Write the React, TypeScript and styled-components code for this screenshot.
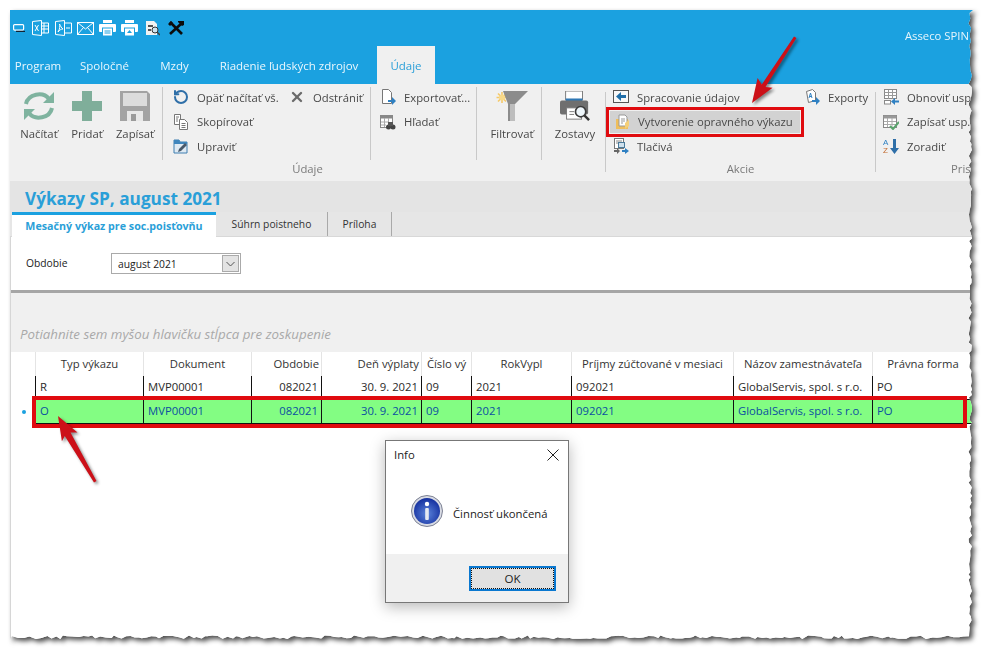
import React from "react";
import styled, { createGlobalStyle } from "styled-components";
import { RotateCcw, X } from "lucide-react";

const BLUE = "#1ba1e0";
const RED = "#e00b0f";
const FONT = `"Open Sans", "Noto Sans", sans-serif`;
const WIN_W = 963;
const WIN_H = 630;
const COLUMNS = "24px 108px 108px 70px 100px 50px 100px 162px 139px 1fr";

// jagged right and bottom edge of the pasted screenshot
function tornEdge(w: number, h: number) {
  let seed = 17;
  const rnd = () => {
    seed = (seed * 16807) % 2147483647;
    return (seed % 1000) / 1000;
  };
  const pts = ["0px 0px", `${w}px 0px`];
  for (let y = 3; y < h - 4; y += 2 + rnd() * 4) {
    pts.push(`${(w - 1 - rnd() * 3.5).toFixed(1)}px ${y.toFixed(1)}px`);
  }
  for (let x = w - 4; x > 0; x -= 2 + rnd() * 5) {
    pts.push(`${x.toFixed(1)}px ${(h - 1 - rnd() * 3.5).toFixed(1)}px`);
  }
  pts.push(`0px ${h}px`);
  return `polygon(${pts.join(",")})`;
}

const Refresh = () => (
  <svg width="32" height="30" viewBox="0 0 32 30" fill="none" stroke="#7fb39f" strokeWidth="4">
    <path d="M3 13C5 3 20 0 26 8" />
    <path d="M29 17C27 27 12 30 6 22" />
    <path d="M31 1v11H20z" fill="#7fb39f" stroke="none" />
    <path d="M1 29V18h11z" fill="#7fb39f" stroke="none" />
  </svg>
);
const Plus = () => (
  <svg width="30" height="30" viewBox="0 0 30 30" fill="#7fae9a">
    <rect x="10" width="10" height="30" />
    <rect y="10" width="30" height="10" />
  </svg>
);
const Floppy = () => (
  <svg width="30" height="30" viewBox="0 0 30 30">
    <path d="M0 0h27l3 3v27H0z" fill="#a3a3a3" />
    <rect x="3" y="2" width="24" height="13" fill="#dcdcdc" />
    <rect x="7" y="20" width="16" height="10" fill="#e8e8e8" />
    <rect x="11" y="23" width="5" height="7" fill="#9a9a9a" />
  </svg>
);
const Funnel = () => (
  <svg width="32" height="30" viewBox="0 0 32 30">
    <g stroke="#f5c96a" strokeWidth="1.6">
      <path d="M6 1v11M0.500 6.500h11M2 2.500l8 8M10 2.500l-8 8" />
    </g>
    <circle cx="6" cy="6.500" r="3" fill="#f8d98a" />
    <path d="M7 0h25L19 13v17h-7V13z" fill="#8c8c8c" />
    <path d="M14 13h5v17h-5z" fill="#bdbdbd" />
  </svg>
);
const ReportPrinter = () => (
  <svg width="32" height="32" viewBox="0 0 32 32">
    <rect x="6" y="0" width="18" height="9" fill="#fff" stroke="#777" />
    <rect x="6" y="8" width="18" height="3" fill="#2f78b5" />
    <rect x="0" y="10" width="30" height="15" rx="2" fill="#6f6f6f" />
    <rect x="7" y="18" width="16" height="12" fill="#fff" stroke="#777" />
    <path d="M10 22h5M10 25h5" stroke="#777" />
    <circle cx="22" cy="22" r="5.5" fill="#eef6fb" stroke="#3a3a3a" strokeWidth="1.8" />
    <path d="M26 26l5 5" stroke="#333" strokeWidth="2.6" />
  </svg>
);

const CopyDocs = () => (
  <svg width="16" height="16" viewBox="0 0 16 16" fill="#fff" stroke="#777">
    <path d="M1.5.5h6v10h-6z" />
    <path d="M6.5 5.5h5l3 3v7h-8z" />
    <path d="M8.5 9.5h4M8.5 11.5h4M8.5 13.5h4M3 3h3M3 5h2M3 7h2" />
  </svg>
);
const FolderPen = () => (
  <svg width="16" height="16" viewBox="0 0 16 16">
    <path d="M1 2h5l1 2h7v11H1z" fill="#dfeaf3" stroke="#3f7fb0" />
    <path d="M1 2h5l1 2h7v2H1z" fill="#3f86bd" />
    <path d="M5 14l1-3 6-6 2 2-6 6z" fill="#47586a" />
  </svg>
);
const DocArrow = () => (
  <svg width="16" height="16" viewBox="0 0 16 16">
    <path d="M2.5.5h6l3 3v11h-9z" fill="#fff" stroke="#777" />
    <path d="M8 11h4V8l4 4-4 4v-3H8z" fill="#2f80c2" />
  </svg>
);
const TableFind = () => (
  <svg width="16" height="16" viewBox="0 0 16 16">
    <rect x=".5" y="1.5" width="12" height="12" fill="#fff" stroke="#888" />
    <rect x=".5" y="1.5" width="12" height="3" fill="#888" />
    <path d="M4.5 4v9M8.5 4v5M1 8h8M1 11h5" stroke="#aaa" />
    <circle cx="8.5" cy="13" r="2.5" fill="#444" />
    <circle cx="13" cy="13" r="2.5" fill="#444" />
    <rect x="8" y="8" width="5" height="4" fill="#555" />
  </svg>
);
const BackBox = () => (
  <svg width="16" height="16" viewBox="0 0 16 16">
    <rect x=".5" y="1.5" width="15" height="12" fill="#f8f8f8" stroke="#555" />
    <path d="M8 3v3h5v3H8v3L3 7.500z" fill="#1f6ea8" />
  </svg>
);
const YellowDoc = () => (
  <svg width="16" height="16" viewBox="0 0 16 16">
    <path d="M2 5h12v10H2z" fill="#efbe5c" />
    <path d="M5 1h6l2 2v9H5z" fill="#fff" stroke="#999" />
    <path d="M7 5h4M7 7h4M7 9h2" stroke="#999" />
    <path d="M11 9l4-3v6l-4 3z" fill="#f5cf78" />
  </svg>
);
const Forms = () => (
  <svg width="16" height="16" viewBox="0 0 16 16">
    <rect x="1.5" y=".5" width="9" height="10" fill="#fff" stroke="#777" />
    <path d="M3 3h6M3 5h3" stroke="#888" />
    <rect x="5.5" y="4.5" width="6" height="5" fill="#cfe0ec" stroke="#4a7a9a" />
    <path d="M1 12h3v-2l3 3-3 3v-2H1z" fill="#666" />
    <path d="M9 12h3v-2l4 3-4 3v-2H9z" fill="#2f80c2" />
  </svg>
);
const ExportDoc = () => (
  <svg width="16" height="16" viewBox="0 0 16 16">
    <path d="M2.5 2.5l6-2 3 3v8l-7 2z" fill="#fff" stroke="#777" />
    <path d="M5 9l1.5-5 1.5 5M5.6 7.5h2" stroke="#2f80c2" fill="none" />
    <path d="M8 11h4V8l4 4-4 4v-3H8z" fill="#2f80c2" />
  </svg>
);
const TableBack = () => (
  <svg width="16" height="16" viewBox="0 0 16 16">
    <rect x="1.5" y=".5" width="12" height="9" fill="#fff" stroke="#888" />
    <path d="M1.5 3.5h12M1.5 6.5h12M5.5 1v9M9.5 1v9" stroke="#999" />
    <rect x="1.5" y="11.5" width="6" height="3.5" fill="#fff" stroke="#888" />
    <path d="M16 11.500h-4V9l-4 3.500 4 3.500v-2.500h4z" fill="#2f80c2" />
  </svg>
);
const TableCheck = () => (
  <svg width="16" height="16" viewBox="0 0 16 16">
    <rect x=".5" y="1.5" width="13" height="12" fill="#fff" stroke="#888" />
    <rect x=".5" y="1.5" width="13" height="3" fill="#999" />
    <path d="M4.5 4v9M9 4v9M1 7.500h12M1 10.500h12" stroke="#aaa" />
    <path d="M7 12l3 3 6-7" fill="none" stroke="#5aa46d" strokeWidth="2" />
  </svg>
);
const SortAz = () => (
  <svg width="16" height="16" viewBox="0 0 16 16">
    <text x="0" y="7" fontSize="8" fontFamily="Liberation Sans" fill="#2f80c2">A</text>
    <text x="0" y="15" fontSize="8" fontFamily="Liberation Sans" fill="#c26a2f">Z</text>
    <path d="M10 1h3v9h3l-4.500 6L7 10h3z" fill="#2f6fa8" />
  </svg>
);

const WinIcon = () => (
  <svg width="12" height="8" viewBox="0 0 12 8" fill="none" stroke="#fff" strokeWidth="1.2">
    <rect x=".6" y=".6" width="10" height="5.500" rx="1" />
    <path d="M3 7.400h9" stroke="#123" />
  </svg>
);
const XlsIcon = () => (
  <svg width="17" height="16" viewBox="0 0 17 16" fill="none" stroke="#fff">
    <path d="M.5 1.500l9-1v15l-9-1z" />
    <path d="M9.500 3h7v10h-7M12 3v10M9.500 6h7M9.500 9h7" />
    <path d="M3 5l3.500 6M6.500 5L3 11" />
  </svg>
);
const PdfIcon = () => (
  <svg width="17" height="16" viewBox="0 0 17 16" fill="none" stroke="#fff">
    <path d="M.5 1.500l9-1v15l-9-1z" />
    <path d="M9.500 3h7v10h-7M11 8h4" />
    <path d="M3 12c2-3 2-6 1.500-8 1 2 2 4 3.500 5-2 0-3.500 1-5 3z" />
  </svg>
);
const MailIcon = () => (
  <svg width="17" height="15" viewBox="0 0 17 15" fill="none" stroke="#fff">
    <rect x=".5" y="1.500" width="16" height="12" />
    <path d="M.5 1.500l8 6.500 8-6.500M.5 13.500l6-7M16.500 13.500l-6-7" />
  </svg>
);
const PrintIcon = ({ up }: { up?: boolean }) => (
  <svg width="17" height="16" viewBox="0 0 17 16" fill="#fff">
    <rect x="4" y="0" width="9" height="3" />
    <rect x="0" y="4" width="17" height="8" rx="1" />
    <rect x="3.500" y="8" width="10" height="8" fill="#fff" stroke={BLUE} />
    {up ? <path d="M8.500 10l2.500 3H6z" fill={BLUE} /> : <path d="M5.500 11h6M5.500 13h6" stroke={BLUE} />}
  </svg>
);
const PreviewIcon = () => (
  <svg width="14" height="16" viewBox="0 0 14 16">
    <path d="M0 1h8l3 3v11H0z" fill="#f2f2f2" />
    <path d="M2 5h5v2H2zM2 9h3v2H2z" fill="#555" />
    <circle cx="9" cy="10" r="3" fill="#cfe5f2" stroke="#333" />
    <path d="M11 12l3 3" stroke="#444" strokeWidth="1.500" />
  </svg>
);
const ToolsIcon = () => (
  <svg width="16" height="15" viewBox="0 0 16 15" fill="none" stroke="#0c0c0c">
    <path d="M2 1l12 12" strokeWidth="2.600" />
    <path d="M14 2L2 13" strokeWidth="2.600" />
    <path d="M10 0h6v4l-2 1-4-4zM0 3l3-3 2 2-3 3z" fill="#0c0c0c" stroke="none" />
  </svg>
);
const InfoIcon = () => (
  <svg width="32" height="32" viewBox="0 0 32 32">
    <defs>
      <radialGradient id="infoFill" cx="50%" cy="60%" r="60%">
        <stop offset="0" stopColor="#5b83db" />
        <stop offset="1" stopColor="#142f9e" />
      </radialGradient>
    </defs>
    <circle cx="16" cy="16" r="15.500" fill="#d8dbe4" stroke="#7d8294" />
    <circle cx="16" cy="16" r="13" fill="url(#infoFill)" />
    <circle cx="16" cy="9" r="2.200" fill="#fff" />
    <rect x="14.200" y="13" width="3.600" height="12" rx="1" fill="#e7eaf2" />
  </svg>
);

const Global = createGlobalStyle`
  html, body {
    margin: 0;
    background: #fff;
  }
  body {
    width: 991px;
    height: 658px;
    overflow: hidden;
    font-family: ${FONT};
    font-size: 11.3px;
    color: #333;
  }
`;

const Page = styled.div`
  padding: 10px;
`;

const Shadow = styled.div`
  width: ${WIN_W}px;
  height: ${WIN_H}px;
  filter: drop-shadow(3px 3px 2.5px rgba(0, 0, 0, 0.7));
`;

const Window = styled.div`
  position: relative;
  width: 100%;
  height: 100%;
  background: #fff;
  display: flex;
  flex-direction: column;
  overflow: hidden;
`;

const TopBar = styled.header`
  background: ${BLUE};
  height: 74px;
  flex: none;
  display: flex;
  flex-direction: column;
`;

const QuickBar = styled.div`
  height: 36px;
  display: flex;
  align-items: center;
  padding: 0 4px 0 3px;
  gap: 5px;
`;

const QuickSpace = styled.span<{ $w: number }>`
  display: inline-flex;
  justify-content: center;
  width: ${(p) => p.$w}px;
`;

const Brand = styled.span`
  margin-left: auto;
  color: #e6f5fc;
  transform: translateY(7px);
  white-space: nowrap;
`;

const MenuRow = styled.nav`
  height: 38px;
  display: flex;
`;

const MenuTab = styled.div<{ $w: number; $active?: boolean }>`
  width: ${(p) => p.$w}px;
  margin-left: ${(p) => (p.$active ? 5 : 0)}px;
  display: flex;
  align-items: center;
  justify-content: center;
  font-size: 11.5px;
  white-space: nowrap;
  color: ${(p) => (p.$active ? "#2a9fd8" : "#eaf7fd")};
  background: ${(p) => (p.$active ? "#f0f0f0" : "transparent")};
`;

const Ribbon = styled.section`
  height: 97px;
  flex: none;
  background: #f0f0f0;
  display: flex;
  overflow: hidden;
  color: #484848;
`;

const Group = styled.div<{ $w: number }>`
  width: ${(p) => p.$w}px;
  height: 80px;
  margin-top: 8px;
  flex: none;
  box-sizing: border-box;
  border-right: 1px solid #c9c9c9;
  display: flex;
  flex-direction: column;

  &:last-child {
    border-right: 0;
  }
`;

const GroupBody = styled.div`
  display: flex;
  height: 73px;
  margin-top: -5px;
  flex: none;
`;

const GroupLabel = styled.div<{ $left?: boolean }>`
  line-height: 18px;
  color: #7a7a7a;
  text-align: ${(p) => (p.$left ? "left" : "center")};
  padding-left: ${(p) => (p.$left ? 75 : 0)}px;
  white-space: nowrap;
`;

const Section = styled.div<{ $w: number; $pad?: number; $end?: boolean }>`
  width: ${(p) => p.$w}px;
  flex: none;
  box-sizing: border-box;
  padding-left: ${(p) => p.$pad ?? 0}px;
  border-right: ${(p) => (p.$end ? "0" : "1px solid #c9c9c9")};
`;

const LargeRow = styled.div`
  display: flex;
`;

const LargeButton = styled.div<{ $w?: number }>`
  width: ${(p) => p.$w ?? 48}px;
  padding-top: 4px;
  display: flex;
  flex-direction: column;
  align-items: center;

  svg {
    height: 30px;
  }

  span {
    margin-top: 5px;
    line-height: 16px;
    white-space: nowrap;
  }
`;

const SmallGrid = styled.div<{ $cols?: string }>`
  display: grid;
  grid-template-columns: ${(p) => p.$cols ?? "auto"};
  grid-auto-rows: 24.500px;
  margin-top: -2px;
  justify-content: start;
`;

const SmallButton = styled.div<{ $hot?: boolean; $col?: number }>`
  position: relative;
  display: flex;
  align-items: center;
  gap: 8px;
  white-space: nowrap;
  grid-column: ${(p) => p.$col ?? 1};

  ${(p) =>
    p.$hot &&
    `
    background: #d2d2d2;
    margin: 1px 4px 1px -3px;
    padding-left: 4px;

    &::after {
      content: "";
      position: absolute;
      inset: -4px;
      border: 3px solid ${RED};
    }
  `}
`;

const PanelHead = styled.div`
  height: 31px;
  flex: none;
  box-sizing: border-box;
  padding: 5px 0 0 15px;
  background: #e4e4e4;
  color: #2a9fd8;
  font-size: 17.2px;
  font-weight: 700;
  line-height: 26px;
`;

const TabStrip = styled.div`
  height: 25px;
  flex: none;
  display: flex;
  background: #e6e6e6;
  border-bottom: 1px solid #d8d8d8;
  box-sizing: border-box;
`;

const PanelTab = styled.div<{ $w: number; $active?: boolean }>`
  width: ${(p) => p.$w}px;
  height: ${(p) => (p.$active ? 25 : 24)}px;
  flex: none;
  box-sizing: border-box;
  margin-left: ${(p) => (p.$active ? 2 : 0)}px;
  display: flex;
  align-items: center;
  justify-content: center;
  white-space: nowrap;
  font-size: ${(p) => (p.$active ? 10.7 : 10.3)}px;
  color: ${(p) => (p.$active ? "#2a9fd8" : "#333")};
  font-weight: ${(p) => (p.$active ? 700 : 400)};
  background: ${(p) => (p.$active ? "#fff" : "transparent")};
  border-top: ${(p) => (p.$active ? `3px solid ${BLUE}` : "0")};
  border-right: ${(p) => (p.$active ? "0" : "1px solid #a9a9a9")};
`;

const Body = styled.main`
  flex: 1;
  display: flex;
  flex-direction: column;
  border-left: 1px solid #d6d6d6;
  background: #fff;
`;

const FilterForm = styled.div`
  height: 53px;
  flex: none;
  display: flex;
  align-items: center;
  padding-left: 15px;
  font-size: 10.3px;
  color: #222;
`;

const FilterLabel = styled.label`
  width: 85px;
  padding-bottom: 1px;
`;

const Select = styled.div`
  width: 130px;
  height: 21px;
  box-sizing: border-box;
  border: 1px solid #aaa;
  padding: 0 1px 0 6px;
  display: flex;
  align-items: center;
  justify-content: space-between;
`;

const SelectArrow = styled.span`
  width: 17px;
  height: 17px;
  box-sizing: border-box;
  background: #e3e3e3;
  border: 1px solid #aaa;
  display: flex;
  align-items: center;
  justify-content: center;
`;

const Splitter = styled.div`
  height: 3px;
  flex: none;
  background: #a6a6a6;
`;

const GroupPanel = styled.div`
  height: 59px;
  flex: none;
  box-sizing: border-box;
  background: #f0f0f0;
  padding: 32px 0 0 9px;
  color: #a9a9a9;
  font-size: 13.3px;
  font-style: italic;
  line-height: 18px;
`;

const GridHead = styled.div`
  display: grid;
  grid-template-columns: ${COLUMNS};
  height: 24px;
`;

const HeadCell = styled.div<{ $right?: boolean }>`
  display: flex;
  align-items: center;
  justify-content: ${(p) => (p.$right ? "flex-end" : "center")};
  padding: 0 ${(p) => (p.$right ? 2 : 0)}px 2px 0;
  box-sizing: border-box;
  border-left: 1px solid #e4e4e4;
  color: #333;
  white-space: nowrap;

  &:first-child {
    border-left: 0;
  }
`;

const GridRow = styled.div<{ $current?: boolean }>`
  display: grid;
  grid-template-columns: ${COLUMNS};
  height: 24px;
  color: ${(p) => (p.$current ? "#0b4fa0" : "#2a2a2a")};
`;

const RowMark = styled.div`
  display: flex;
  align-items: center;
  justify-content: center;
  padding-left: 1px;
`;

const Dot = styled.span`
  width: 4px;
  height: 4px;
  border-radius: 50%;
  background: ${BLUE};
`;

const Cell = styled.div<{ $right?: boolean; $current?: boolean }>`
  display: flex;
  align-items: center;
  justify-content: ${(p) => (p.$right ? "flex-end" : "flex-start")};
  padding: 0 3px 2px 4px;
  box-sizing: border-box;
  border-left: 1px solid #111;
  border-bottom: 1px solid #111;
  background: ${(p) => (p.$current ? "#83fd83" : "#fff")};
  white-space: nowrap;
  overflow: hidden;
`;

const RowFrame = styled.div`
  position: absolute;
  left: 22px;
  top: 386px;
  width: 935px;
  height: 32px;
  box-sizing: border-box;
  border: 4px solid ${RED};
`;

const Arrows = styled.svg`
  position: absolute;
  left: 0;
  top: 0;
  pointer-events: none;
  filter: drop-shadow(2px 2px 1.500px rgba(0, 0, 0, 0.45));
`;

const Dialog = styled.div`
  position: absolute;
  left: 375px;
  top: 430px;
  width: 184px;
  height: 163px;
  box-sizing: border-box;
  border: 1px solid #777;
  background: #fff;
  box-shadow: 0 4px 14px rgba(0, 0, 0, 0.28);
  display: flex;
  flex-direction: column;
  color: #222;
`;

const DialogTitle = styled.div`
  height: 27px;
  flex: none;
  display: flex;
  align-items: center;
  justify-content: space-between;
  padding: 0 9px 0 8px;
`;

const DialogBody = styled.div`
  flex: 1;
  display: flex;
  align-items: center;
  gap: 9px;
  padding: 0 0 0 25px;
  white-space: nowrap;
`;

const DialogText = styled.span`
  padding-top: 4px;
  margin-left: 1px;
`;

const DialogFoot = styled.div`
  height: 48px;
  flex: none;
  background: #f0f0f0;
  display: flex;
  align-items: center;
  justify-content: flex-end;
  padding: 0 12px 0 0;
`;

const OkButton = styled.button`
  width: 87px;
  height: 25px;
  box-sizing: border-box;
  border: 2px solid #0a78d0;
  outline: 1px dotted #111;
  outline-offset: -3px;
  background: #e1e1e1;
  color: #222;
  font-family: ${FONT};
  font-size: 11.5px;
  padding: 0;
`;

const HEAD = [
  { t: "" },
  { t: "Typ výkazu" },
  { t: "Dokument" },
  { t: "Obdobie", right: true },
  { t: "Deň výplaty", right: true },
  { t: "Číslo vý" },
  { t: "RokVypl" },
  { t: "Príjmy zúčtované v mesiaci" },
  { t: "Názov zamestnávateľa" },
  { t: "Právna forma" },
];

const ROWS = [
  ["R", "MVP00001", "082021", "30. 9. 2021", "09", "2021", "092021", "GlobalServis, spol. s r.o.", "PO"],
  ["O", "MVP00001", "082021", "30. 9. 2021", "09", "2021", "092021", "GlobalServis, spol. s r.o.", "PO"],
];

export default function App() {
  return (
    <Page>
      <Global />
      <Shadow>
        <Window style={{ clipPath: tornEdge(WIN_W, WIN_H) }}>
          <TopBar>
            <QuickBar>
              <QuickSpace $w={12}><WinIcon /></QuickSpace>
              <QuickSpace $w={20}><XlsIcon /></QuickSpace>
              <QuickSpace $w={17}><PdfIcon /></QuickSpace>
              <QuickSpace $w={17}><MailIcon /></QuickSpace>
              <QuickSpace $w={17}><PrintIcon /></QuickSpace>
              <QuickSpace $w={17}><PrintIcon up /></QuickSpace>
              <QuickSpace $w={19}><PreviewIcon /></QuickSpace>
              <QuickSpace $w={17}><ToolsIcon /></QuickSpace>
              <Brand>Asseco SPIN</Brand>
            </QuickBar>
            <MenuRow>
              <MenuTab $w={56}>Program</MenuTab>
              <MenuTab $w={77}>Spoločné</MenuTab>
              <MenuTab $w={63}>Mzdy</MenuTab>
              <MenuTab $w={166}>Riadenie ľudských zdrojov</MenuTab>
              <MenuTab $w={58} $active>Údaje</MenuTab>
            </MenuRow>
          </TopBar>

          <Ribbon>
            <Group $w={596}>
              <GroupBody>
                <Section $w={153} $pad={5}>
                  <LargeRow>
                    <LargeButton><Refresh /><span>Načítať</span></LargeButton>
                    <LargeButton><Plus /><span>Pridať</span></LargeButton>
                    <LargeButton><Floppy /><span>Zapísať</span></LargeButton>
                  </LargeRow>
                </Section>
                <Section $w={208} $pad={10}>
                  <SmallGrid $cols="116px auto">
                    <SmallButton>
                      <RotateCcw size={16} color="#2f6fa8" strokeWidth={3} />
                      Opäť načítať vš.
                    </SmallButton>
                    <SmallButton $col={2}>
                      <X size={16} color="#6a6a6a" strokeWidth={3.500} />
                      Odstrániť
                    </SmallButton>
                    <SmallButton><CopyDocs />Skopírovať</SmallButton>
                    <SmallButton><FolderPen />Upraviť</SmallButton>
                  </SmallGrid>
                </Section>
                <Section $w={106} $pad={9}>
                  <SmallGrid>
                    <SmallButton><DocArrow />Exportovať...</SmallButton>
                    <SmallButton><TableFind />Hľadať</SmallButton>
                  </SmallGrid>
                </Section>
                <Section $w={65}>
                  <LargeButton $w={70}><Funnel /><span>Filtrovať</span></LargeButton>
                </Section>
                <Section $w={63} $end>
                  <LargeButton $w={66}><ReportPrinter /><span>Zostavy</span></LargeButton>
                </Section>
              </GroupBody>
              <GroupLabel>Údaje</GroupLabel>
            </Group>

            <Group $w={270}>
              <GroupBody>
                <Section $w={269} $pad={7} $end>
                  <SmallGrid $cols="191px auto">
                    <SmallButton><BackBox />Spracovanie údajov</SmallButton>
                    <SmallButton $col={2}><ExportDoc />Exporty</SmallButton>
                    <SmallButton $hot><YellowDoc />Vytvorenie opravného výkazu</SmallButton>
                    <SmallButton><Forms />Tlačivá</SmallButton>
                  </SmallGrid>
                </Section>
              </GroupBody>
              <GroupLabel>Akcie</GroupLabel>
            </Group>

            <Group $w={100}>
              <GroupBody>
                <Section $w={100} $pad={7} $end>
                  <SmallGrid>
                    <SmallButton><TableBack />Obnoviť usp</SmallButton>
                    <SmallButton><TableCheck />Zapísať usp.</SmallButton>
                    <SmallButton><SortAz />Zoradiť</SmallButton>
                  </SmallGrid>
                </Section>
              </GroupBody>
              <GroupLabel $left>Pris</GroupLabel>
            </Group>
          </Ribbon>

          <PanelHead>Výkazy SP, august 2021</PanelHead>
          <TabStrip>
            <PanelTab $w={204} $active>Mesačný výkaz pre soc.poisťovňu</PanelTab>
            <PanelTab $w={112}>Súhrn poistneho</PanelTab>
            <PanelTab $w={64}>Príloha</PanelTab>
          </TabStrip>

          <Body>
            <FilterForm>
              <FilterLabel>Obdobie</FilterLabel>
              <Select>
                august 2021
                <SelectArrow>
                  <svg width="9" height="6" viewBox="0 0 9 6" fill="none" stroke="#555">
                    <path d="M.5 1l4 4 4-4" />
                  </svg>
                </SelectArrow>
              </Select>
            </FilterForm>
            <Splitter />
            <GroupPanel>Potiahnite sem myšou hlavičku stĺpca pre zoskupenie</GroupPanel>
            <GridHead>
              {HEAD.map((h, i) => (
                <HeadCell key={i} $right={h.right}>{h.t}</HeadCell>
              ))}
            </GridHead>
            {ROWS.map((row, r) => (
              <GridRow key={r} $current={r === 1}>
                <RowMark>{r === 1 && <Dot />}</RowMark>
                {row.map((v, c) => (
                  <Cell key={c} $right={c === 2 || c === 3} $current={r === 1}>{v}</Cell>
                ))}
              </GridRow>
            ))}
          </Body>

          <RowFrame />

          <Dialog>
            <DialogTitle>
              Info
              <svg width="12" height="12" viewBox="0 0 12 12" stroke="#222">
                <path d="M.5.5l11 11M11.500.5l-11 11" />
              </svg>
            </DialogTitle>
            <DialogBody>
              <InfoIcon />
              <DialogText>Činnosť ukončená</DialogText>
            </DialogBody>
            <DialogFoot>
              <OkButton>OK</OkButton>
            </DialogFoot>
          </Dialog>

          <Arrows width={WIN_W} height={WIN_H} viewBox={`10 10 ${WIN_W} ${WIN_H}`}>
            <polygon
              fill="#cc1018"
              points="796.500,38 794,36.500 761.800,84.500 757.600,78 752,103 772.600,87.800 765.500,87"
            />
            <polygon
              fill="#cc1018"
              points="96.500,481 94,482.500 64.800,436 61.900,441.300 58,416 77.500,432.500 70.500,432.500"
            />
          </Arrows>
        </Window>
      </Shadow>
    </Page>
  );
}
